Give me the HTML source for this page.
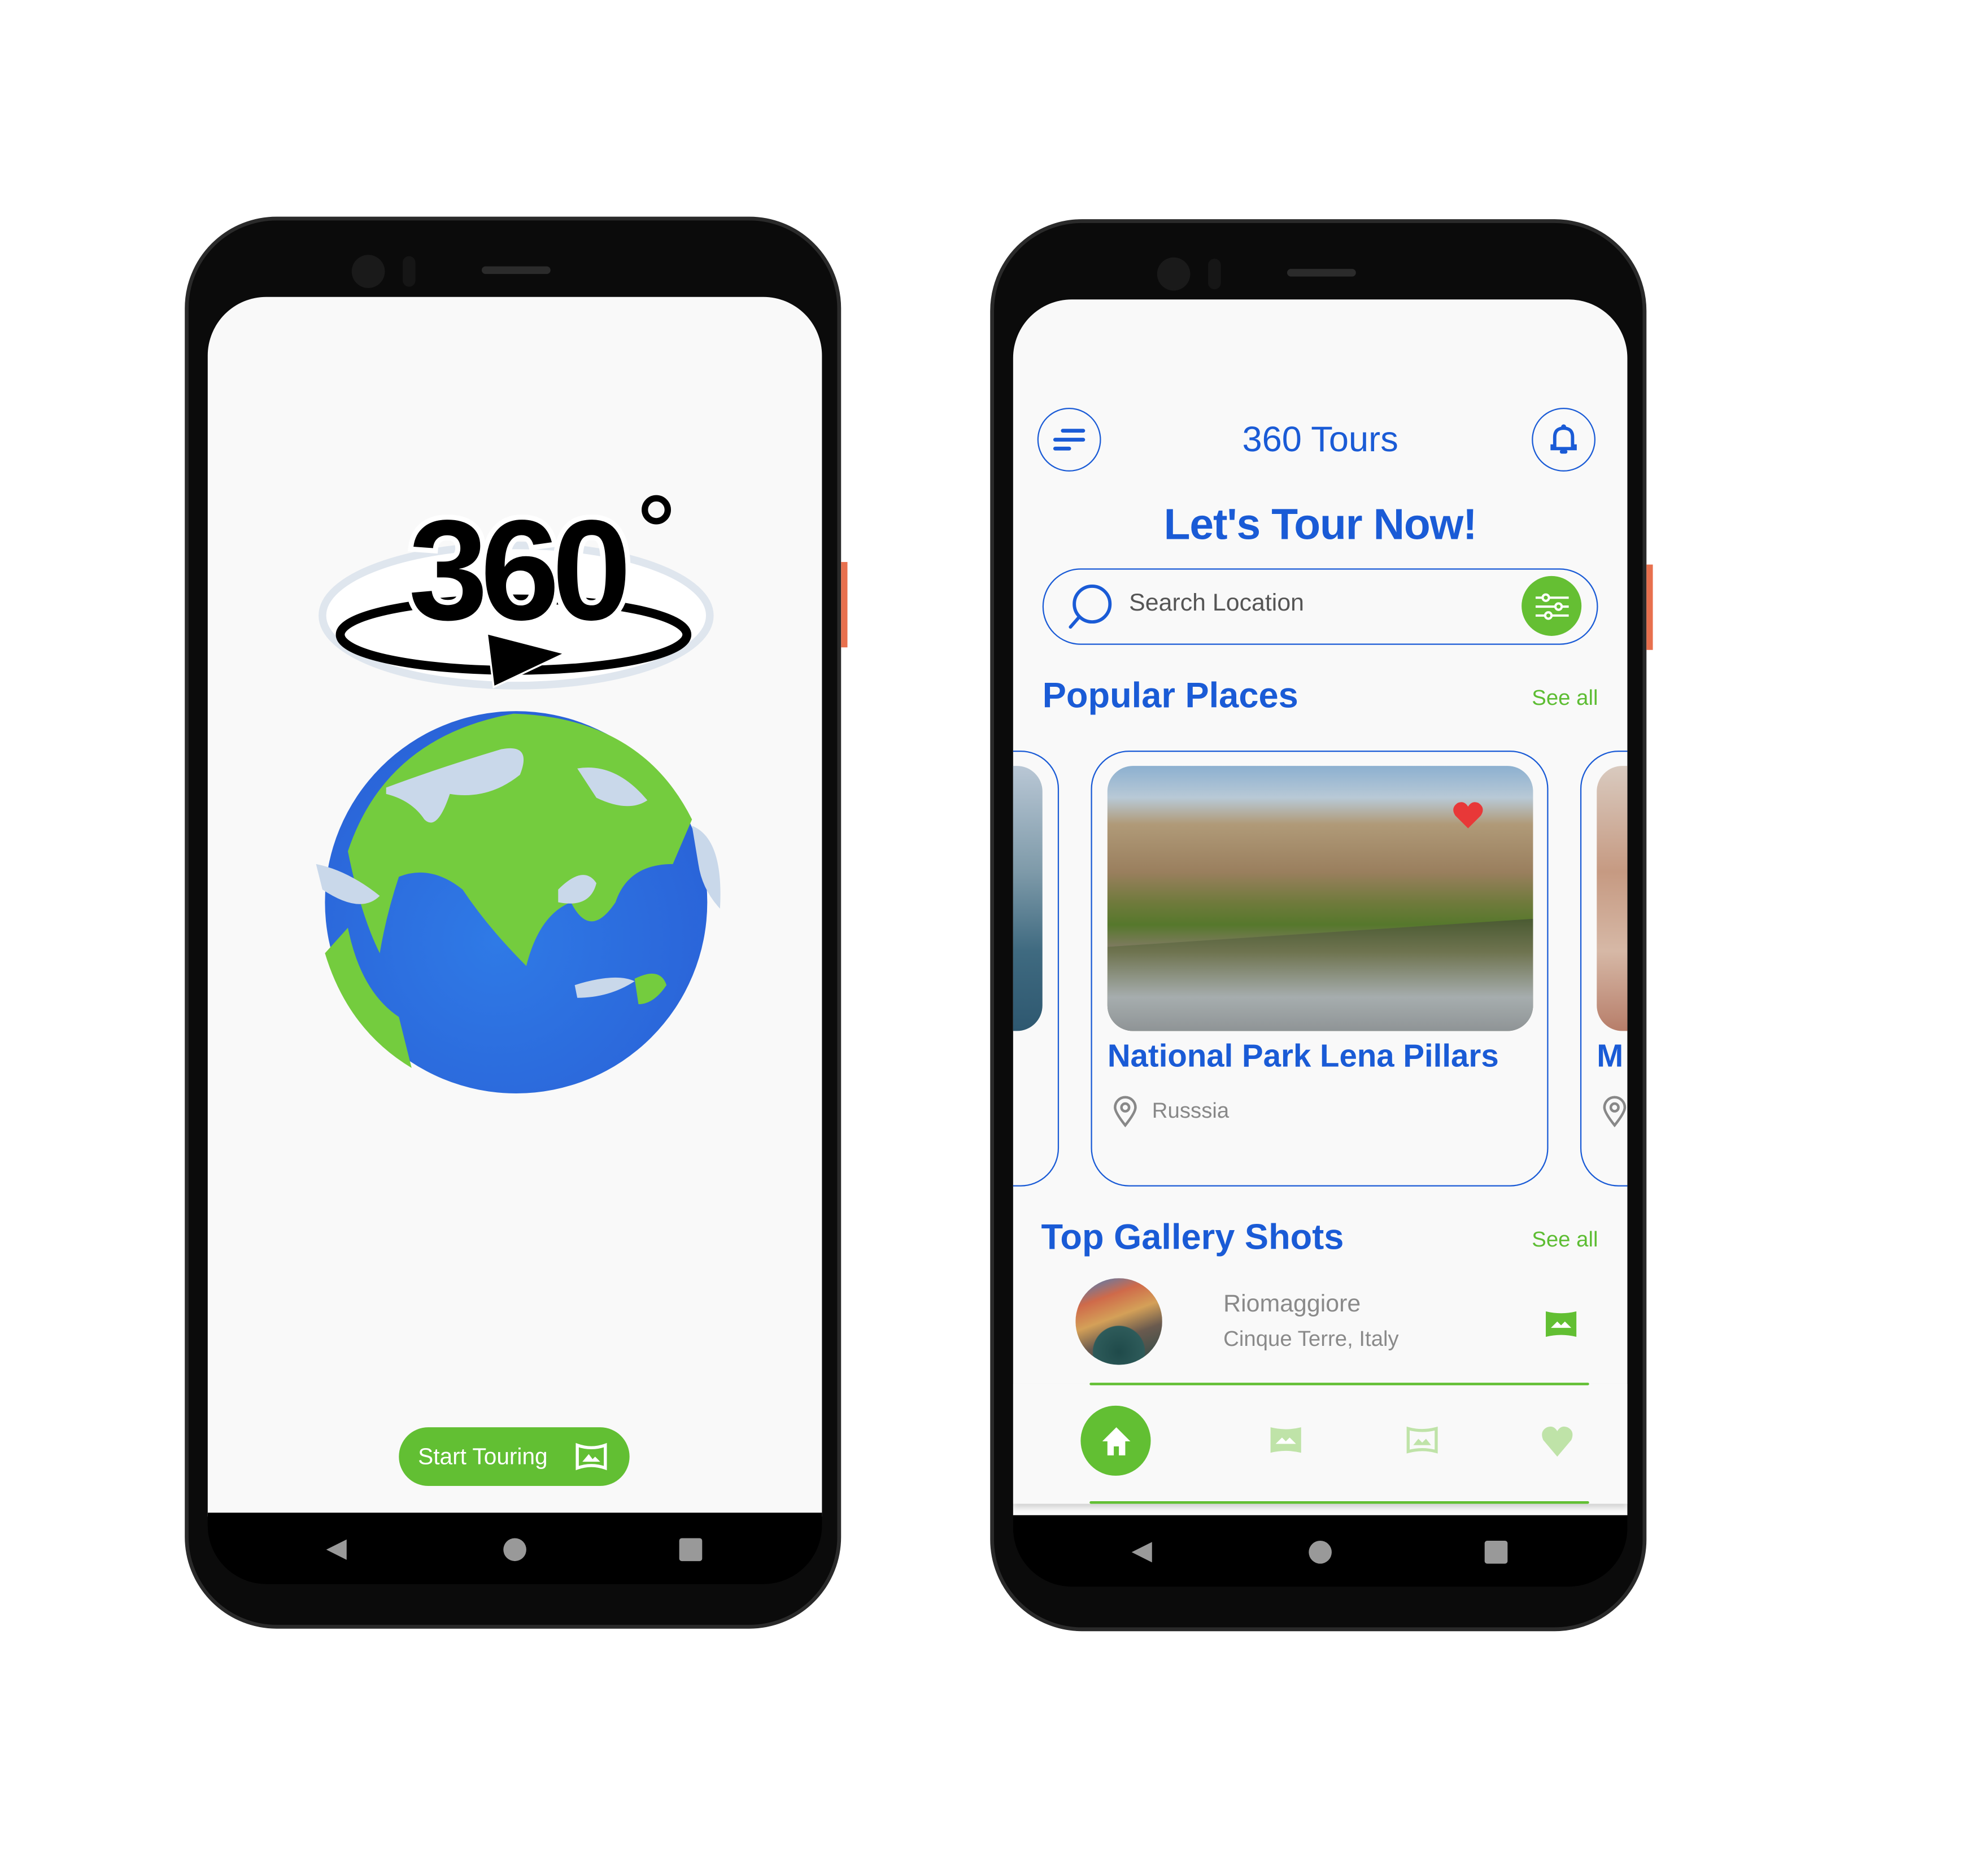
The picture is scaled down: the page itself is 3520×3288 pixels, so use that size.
<!DOCTYPE html>
<html><head><meta charset="utf-8"><style>
*{margin:0;padding:0;box-sizing:border-box}
html,body{width:3520px;height:3288px;background:#fff;overflow:hidden}
#w{position:absolute;left:0;top:0;width:1560px;height:1457px;transform:scale(2.25641);transform-origin:0 0;font-family:"Liberation Sans",sans-serif}
.a{position:absolute}
.phone{position:absolute;width:515px;height:1108px;border-radius:72px;background:#0b0b0b;border:3px solid #2a2a2a}
.screen{position:absolute;left:15px;top:60px;width:482px;height:957px;background:#f9f9f9;border-radius:46px 46px 0 0;overflow:hidden}
.navb{position:absolute;left:15px;top:1017px;width:482px;height:58px;background:#000;border-radius:0 0 46px 46px}
.blue{color:#1a5bd6}
.green{color:#5dbd33}
</style></head><body><div id="w">

<!-- LEFT PHONE -->
<div class="phone" style="left:145px;top:170px">
 <div class="a" style="left:128px;top:27px;width:26px;height:26px;border-radius:50%;background:#1a1a1a"></div>
 <div class="a" style="left:168px;top:28px;width:10px;height:24px;border-radius:5px;background:#161616"></div>
 <div class="a" style="left:230px;top:36px;width:54px;height:6px;border-radius:3px;background:#2b2b2b"></div>
 <div class="screen">
  <svg class="a" style="left:80px;top:145px" width="330" height="500" viewBox="0 0 330 500">
   <ellipse cx="162" cy="105" rx="152" ry="55" fill="#fff" stroke="#dfe6ee" stroke-width="6"/>
   <ellipse cx="160" cy="120" rx="136" ry="28" fill="none" stroke="#000" stroke-width="7"/>
   <text x="162" y="108" text-anchor="middle" font-family="Liberation Sans,sans-serif" font-weight="bold" font-size="112" fill="#000" stroke="#fff" stroke-width="8" paint-order="stroke" letter-spacing="-6">360</text>
   <polygon points="140,120 198,135 145,160" fill="#000" stroke="#fff" stroke-width="3" paint-order="stroke"/>
   <circle cx="272" cy="22" r="9" fill="none" stroke="#000" stroke-width="5"/>
   <defs><radialGradient id="gl" cx="0.45" cy="0.6" r="0.6"><stop offset="0" stop-color="#2f7ae6"/><stop offset="1" stop-color="#2a63d8"/></radialGradient></defs>
   <circle cx="162" cy="330" r="150" fill="url(#gl)"/>
   <path d="M30 290 Q60 200 160 182 Q260 185 300 265 L285 300 Q250 300 240 330 Q220 360 205 330 Q180 340 170 380 Q140 350 120 320 Q95 300 70 310 Q60 340 55 370 Q40 340 30 290Z" fill="#74cc3e"/>
   <path d="M12 370 Q30 430 80 460 L70 420 Q40 400 30 350Z" fill="#74cc3e"/>
   <path d="M60 240 Q100 225 150 210 Q175 205 165 230 Q140 250 110 245 Q100 275 90 265 Q80 250 60 245Z" fill="#c9d8ea"/>
   <path d="M210 225 Q240 220 265 250 Q250 260 225 248Z" fill="#c9d8ea"/>
   <path d="M195 320 Q215 300 225 315 Q220 335 195 330Z" fill="#c9d8ea"/>
   <path d="M5 300 Q30 305 55 325 Q40 340 10 320Z" fill="#c9d8ea"/>
   <path d="M208 395 Q240 385 255 392 Q235 405 210 405Z" fill="#c9d8ea"/>
   <path d="M300 270 Q325 280 322 335 Q308 320 305 300Z" fill="#c9d8ea"/>
   <path d="M255 390 Q275 380 280 395 Q270 410 258 410Z" fill="#74cc3e"/>
  </svg>
  <div class="a" style="left:150px;top:887px;width:181px;height:46px;border-radius:23px;background:#62bf33;color:#fff;font-size:18px;line-height:46px;padding-left:15px">Start Touring
   <svg class="a" style="left:138px;top:12px" width="26" height="22" viewBox="0 0 26 22"><path d="M2 2 Q13 6 24 2 V20 Q13 16 2 20Z" fill="none" stroke="#fff" stroke-width="2.4"/><path d="M6 15 L11 9 L14 13 L16 11 L20 15Z" fill="#fff"/></svg>
  </div>
 </div>
 <div class="navb" style="top:1014px;height:56px">
  <svg class="a" style="left:0;top:0" width="482" height="56"><polygon points="93,29 109,21 109,37" fill="#999"/><circle cx="241" cy="29" r="9" fill="#999"/><rect x="370" y="20" width="18" height="18" rx="2" fill="#999"/></svg>
 </div>
 <div class="a" style="left:512px;top:268px;width:5px;height:67px;background:#e8704e"></div>
</div>

<!-- RIGHT PHONE -->
<div class="phone" style="left:777px;top:172px">
 <div class="a" style="left:128px;top:27px;width:26px;height:26px;border-radius:50%;background:#1a1a1a"></div>
 <div class="a" style="left:168px;top:28px;width:10px;height:24px;border-radius:5px;background:#161616"></div>
 <div class="a" style="left:230px;top:36px;width:54px;height:6px;border-radius:3px;background:#2b2b2b"></div>
 <div class="screen" style="height:954px">
  <div class="a" style="left:19px;top:85px;width:50px;height:50px;border-radius:50%;border:1.5px solid #1a5bd6"></div>
  <svg class="a" style="left:30px;top:98px" width="28" height="24"><path d="M9 5H25M3 12H25M3 19H14" stroke="#1a5bd6" stroke-width="3" stroke-linecap="round"/></svg>
  <div class="a" style="left:407px;top:85px;width:50px;height:50px;border-radius:50%;border:1.5px solid #1a5bd6"></div>
  <svg class="a" style="left:419px;top:96px" width="26" height="28"><path d="M6 19V12Q6 5 13 5Q20 5 20 12V19H22V21H4V19Z" fill="none" stroke="#1a5bd6" stroke-width="2.6"/><circle cx="13" cy="4" r="2" fill="#1a5bd6"/><rect x="10" y="22" width="6" height="3" rx="1.5" fill="#1a5bd6"/></svg>
  <div class="a blue" style="left:0;width:482px;top:94px;text-align:center;font-size:28px">360 Tours</div>
  <div class="a blue" style="left:0;width:482px;top:158px;text-align:center;font-size:34px;font-weight:bold;letter-spacing:-0.5px">Let's Tour Now!</div>
  <div class="a" style="left:23px;top:211px;width:436px;height:60px;border-radius:30px;border:1.5px solid #1a5bd6"></div>
  <svg class="a" style="left:40px;top:220px" width="42" height="42"><circle cx="22" cy="19" r="14" fill="none" stroke="#1a5bd6" stroke-width="2.6"/><path d="M12 29L5 37" stroke="#1a5bd6" stroke-width="2.6" stroke-linecap="round"/></svg>
  <div class="a" style="left:91px;top:228px;font-size:19px;color:#555">Search Location</div>
  <div class="a" style="left:399px;top:217px;width:47px;height:47px;border-radius:50%;background:#65bf33"></div>
  <svg class="a" style="left:408px;top:227px" width="30" height="28"><g stroke="#fff" stroke-width="1.8" fill="#65bf33"><path d="M2 7H28M2 14H28M2 21H28"/><circle cx="10" cy="7" r="2.5"/><circle cx="20" cy="14" r="2.5"/><circle cx="12" cy="21" r="2.5"/></g></svg>
  <div class="a blue" style="left:23px;top:295px;font-size:28px;font-weight:bold">Popular Places</div>
  <div class="a green" style="right:23px;top:303px;font-size:17px">See all</div>
  <div class="a" style="left:-340px;top:354px;width:376px;height:342px;border-radius:30px;border:1px solid #1a5bd6"></div>
  <div class="a" style="left:-30px;top:366px;width:53px;height:208px;border-radius:0 20px 20px 0;background:linear-gradient(180deg,#b9c7d5,#7e9aa9 40%,#3f6a80 70%,#2e5870)"></div>
  <div class="a" style="left:61px;top:354px;width:359px;height:342px;border-radius:30px;border:1px solid #1a5bd6"></div>
  <div class="a" style="left:74px;top:366px;width:334px;height:208px;border-radius:20px;overflow:hidden;background:linear-gradient(180deg,#8cb0d0 0%,#b8c9d6 12%,#b09a78 22%,#9a7f5e 40%,#6e7a3b 52%,#56782c 60%,#7d7a5e 68%,#7f8064 75%,#5d604c 88%,#474a3b 100%)">
   <div class="a" style="left:0;top:120px;width:334px;height:88px;background:linear-gradient(180deg,#4a5a32 0%,#6f7450 30%,#a6adae 70%,#8f9496 100%);clip-path:polygon(0 25%,100% 0,100% 100%,0 100%)"></div>
  </div>
  <svg class="a" style="left:344px;top:393px" width="26" height="24"><path d="M13 22L3 12Q-1 6 5 2Q10 0 13 5Q16 0 21 2Q27 6 23 12Z" fill="#e83838"/></svg>
  <div class="a blue" style="left:74px;top:580px;font-size:25px;font-weight:bold">National Park Lena Pillars</div>
  <svg class="a" style="left:77px;top:624px" width="22" height="26"><path d="M11 24Q3 14 3 10A8 8 0 0 1 19 10Q19 14 11 24Z" fill="none" stroke="#888" stroke-width="2"/><circle cx="11" cy="10" r="3" fill="none" stroke="#888" stroke-width="2"/></svg>
  <div class="a" style="left:109px;top:627px;font-size:17px;color:#888">Russsia</div>
  <div class="a" style="left:445px;top:354px;width:376px;height:342px;border-radius:30px;border:1px solid #1a5bd6"></div>
  <div class="a" style="left:458px;top:366px;width:40px;height:208px;border-radius:20px 0 0 20px;background:linear-gradient(180deg,#d9cabf,#c69a82 40%,#d6b8a6 70%,#b77e6a)"></div>
  <div class="a blue" style="left:458px;top:580px;font-size:25px;font-weight:bold">M</div>
  <svg class="a" style="left:461px;top:624px" width="22" height="26"><path d="M11 24Q3 14 3 10A8 8 0 0 1 19 10Q19 14 11 24Z" fill="none" stroke="#888" stroke-width="2"/><circle cx="11" cy="10" r="3" fill="none" stroke="#888" stroke-width="2"/></svg>
  <div class="a blue" style="left:22px;top:720px;font-size:28px;font-weight:bold">Top Gallery Shots</div>
  <div class="a green" style="right:23px;top:728px;font-size:17px">See all</div>
  <div class="a" style="left:49px;top:768px;width:68px;height:68px;border-radius:50%;background:radial-gradient(circle at 50% 85%,#1f4a4a 0%,#2e5b5a 30%,transparent 31%),linear-gradient(160deg,#3a80c8 0%,#cf6a4a 25%,#d4a058 45%,#6a5a4e 65%,#274a48 100%)"></div>
  <div class="a" style="left:165px;top:778px;font-size:19px;color:#8a8a8a">Riomaggiore</div>
  <div class="a" style="left:165px;top:806px;font-size:17px;color:#8a8a8a">Cinque Terre, Italy</div>
  <svg class="a" style="left:417px;top:793px" width="26" height="22"><path d="M1 1Q13 4 25 1V21Q13 18 1 21Z" fill="#62bf33"/><path d="M5 14L10 9L13 12L16 9L21 14Z" fill="#fff"/></svg>
  <div class="a" style="left:0;top:851px;width:482px;height:94px;background:#f9f9f9;box-shadow:0 3px 4px rgba(0,0,0,.15)"></div>
  <div class="a" style="left:60px;top:850px;width:392px;height:2px;background:#62bf33;border-radius:2px"></div>
  <div class="a" style="left:60px;top:943px;width:392px;height:2px;background:#62bf33;border-radius:2px"></div>
  <div class="a" style="left:53px;top:868px;width:55px;height:55px;border-radius:50%;background:#62bf33"></div>
  <svg class="a" style="left:68px;top:883px" width="26" height="26"><path d="M13 2L2 13H6V24H11V17H15V24H20V13H24Z" fill="#fff"/></svg>
  <svg class="a" style="left:201px;top:884px" width="26" height="22"><path d="M1 1Q13 4 25 1V21Q13 18 1 21Z" fill="#bfe3a8"/><path d="M5 14L10 9L13 12L16 9L21 14Z" fill="#fff"/></svg>
  <svg class="a" style="left:308px;top:884px" width="26" height="22"><path d="M2 2Q13 5 24 2V20Q13 17 2 20Z" fill="none" stroke="#bfe3a8" stroke-width="2.4"/><path d="M6 15L10 10L13 13L16 10L20 15Z" fill="#bfe3a8"/></svg>
  <svg class="a" style="left:413px;top:882px" width="28" height="28"><path d="M14 26L3 13Q0 6 6 3Q11 1 14 6Q17 1 22 3Q28 6 25 13Z" fill="#bfe3a8"/></svg>
 </div>
 <div class="navb" style="top:1014px;height:56px">
  <svg class="a" style="left:0;top:0" width="482" height="56"><polygon points="93,29 109,21 109,37" fill="#999"/><circle cx="241" cy="29" r="9" fill="#999"/><rect x="370" y="20" width="18" height="18" rx="2" fill="#999"/></svg>
 </div>
 <div class="a" style="left:512px;top:268px;width:5px;height:67px;background:#e8704e"></div>
</div>

</div></body></html>
